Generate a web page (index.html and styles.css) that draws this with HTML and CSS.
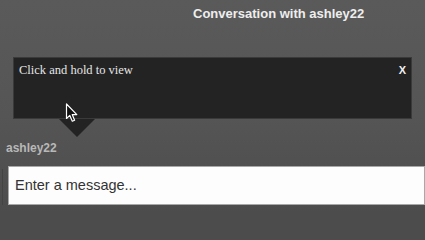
FILE: index.html
```html
<!DOCTYPE html>
<html>
<head>
<meta charset="utf-8">
<link rel="stylesheet" href="styles.css">
</head>
<body>
<div class="page">
  <header class="title-bar">
    <h1 class="title">Conversation with ashley22</h1>
  </header>
  <div class="tooltip">
    <div class="tooltip-row">
      <span class="tooltip-text">Click and hold to view</span>
      <span class="tooltip-close">X</span>
    </div>
    <svg class="cursor" width="14" height="20" viewBox="0 0 14 20">
      <path d="M1.5 1 L1.5 15.5 L4.8 12.4 L7.3 18.2 L9.6 17.2 L7.2 11.6 L11.8 11.6 Z" fill="#111" stroke="#fff" stroke-width="1.2" stroke-linejoin="round"/>
    </svg>
  </div>
  <div class="sender">ashley22</div>
  <div class="compose">
    <div class="compose-edge"></div>
    <div class="message-input">Enter a message...</div>
  </div>
</div>
</body>
</html>
```

FILE: styles.css
```css
html, body {
  margin: 0;
  padding: 0;
}
html {
  background: #4c4c4c;
}
body {
  width: 425px;
  height: 212px;
  overflow: hidden;
  background: linear-gradient(#5a5a5a 0%, #555555 55%, #4c4c4c 100%);
  font-family: "Liberation Sans", Arial, sans-serif;
}
.page {
  display: flex;
  flex-direction: column;
}
.title-bar {
  height: 57px;
  padding-left: 193px;
  box-sizing: border-box;
}
.title {
  margin: 0;
  padding-top: 6px;
  font-size: 13px;
  line-height: 15px;
  font-weight: bold;
  color: #eeeeee;
  white-space: nowrap;
}
.tooltip {
  position: relative;
  margin-left: 13px;
  width: 399px;
  height: 62px;
  box-sizing: border-box;
  background: #232323;
  border: 1px solid #3a3a3a;
}
.tooltip::after {
  content: "";
  position: absolute;
  left: 45px;
  top: 61px;
  width: 0;
  height: 0;
  border-left: 18px solid transparent;
  border-right: 18px solid transparent;
  border-top: 18px solid #232323;
}
.tooltip-row {
  display: flex;
  justify-content: space-between;
  align-items: flex-start;
  padding: 5px 5px 0 5px;
}
.tooltip-text {
  font-family: "Liberation Serif", "Times New Roman", serif;
  font-size: 12.5px;
  line-height: 15px;
  color: #e6e6e6;
}
.tooltip-close {
  font-family: "Liberation Sans", Arial, sans-serif;
  font-weight: bold;
  font-size: 11px;
  line-height: 13px;
  color: #f0f0f0;
  padding-top: 1px;
}
.cursor {
  position: absolute;
  left: 51px;
  top: 45px;
  z-index: 2;
}
.sender {
  margin-top: 22px;
  padding-left: 6px;
  font-size: 12px;
  line-height: 14px;
  font-weight: bold;
  color: #b8b8b8;
}
.compose {
  margin-top: 11px;
  display: flex;
  align-items: stretch;
}
.compose-edge {
  width: 1px;
  margin-left: 2px;
  margin-top: 3px;
  background: #444444;
}
.message-input {
  margin-left: 5px;
  width: 430px;
  height: 39px;
  box-sizing: border-box;
  background: #fdfdfd;
  border: 1px solid #a8a8a8;
  padding-left: 6px;
  font-size: 14.5px;
  line-height: 37px;
  color: #333333;
}
```
